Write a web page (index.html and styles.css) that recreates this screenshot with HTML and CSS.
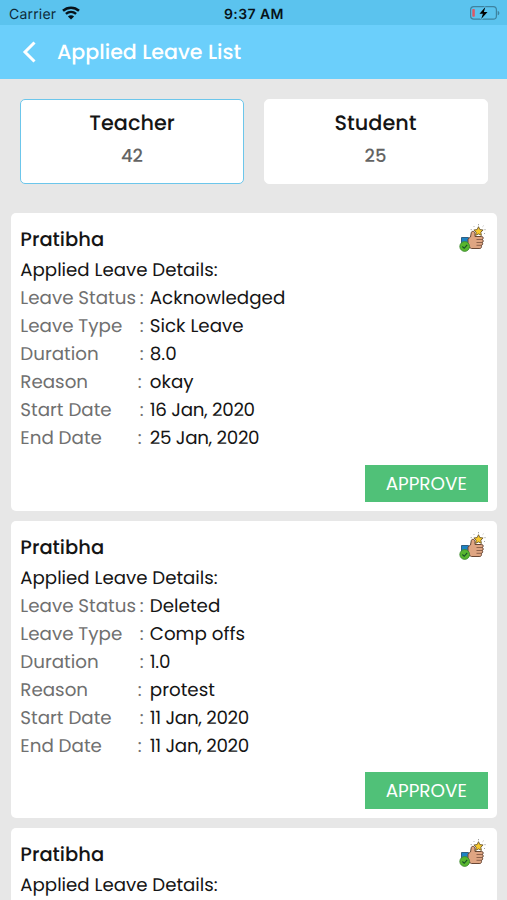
FILE: index.html
```html
<!DOCTYPE html>
<html lang="en">
<head>
<meta charset="utf-8">
<title>Applied Leave List</title>
<link rel="stylesheet" href="styles.css">
</head>
<body>
<svg class="defs" width="0" height="0" aria-hidden="true">
  <symbol id="thumb" viewBox="0 0 28 30">
    <path d="M2.500 13.500h7v9h-7z" fill="#1c83c4" stroke="#17466b" stroke-width=".8"/>
    <path d="M9 15l2.500-2 .8-4.500c.4-1.800 3.700-1.500 3.700 1v3h6.700c1.800 0 2 2.500.6 3 1.400.6 1.200 2.700-.2 3 1 .8.700 2.600-.7 2.800.5 1.800-.3 3.200-1.500 3.200h-8.500L9 22.500z" fill="#dfa582" stroke="#684735" stroke-width="1"/>
    <path d="M17.500 15.500h6M17.500 18.500h6M17.500 21.300h5" stroke="#79503d" stroke-width=".8"/>
    <circle cx="5.700" cy="22.500" r="4.900" fill="#58b62f" stroke="#38852c" stroke-width=".8"/>
    <path d="M3.400 22.500l1.800 1.800 3-3.500" fill="none" stroke="#164f27" stroke-width="1.100"/>
    <path d="M19.500 2.700l1.400 2.900 3.200.4-2.300 2.200.6 3.200-2.900-1.500-2.900 1.500.6-3.200-2.300-2.200 3.200-.4z" fill="#f9ca2b" stroke="#6b5731" stroke-width=".9"/>
    <path d="M12.200 5v1.200M14.500 2l.8.800M19.500 0v1.300M24.500 1.800l-.8.800M26 5v1.200M25.500 9v1" stroke="#999" stroke-width=".9"/>
  </symbol>
</svg>
<div class="statusbar">
  <span class="carrier">Carrier</span>
  <svg class="wifi" width="18" height="14" viewBox="0 0 18 14">
    <path d="M1 4.700C5.600.6 12.400.6 17 4.700M3.900 7.900c3-2.600 7.200-2.600 10.200 0" fill="none" stroke="#07131a" stroke-width="2.500"/>
    <path d="M9 13.600L5.900 10.400c1.700-1.600 4.500-1.600 6.200 0z" fill="#07131a"/>
  </svg>
  <span class="time">9:37 AM</span>
  <svg class="battery" width="30" height="14" viewBox="0 0 30 14">
    <rect x=".6" y=".6" width="25.800" height="12.600" rx="3.200" fill="none" stroke="#3d83a0" stroke-width="1.200"/>
    <path d="M27.700 4.700c2.200.8 2.200 3.800 0 4.600z" fill="#3d83a0"/>
    <rect x="2.300" y="3" width="2.500" height="7.800" rx=".7" fill="#df5663"/>
    <path d="M15.300 1L9.500 7.700h3.400L11.200 13.100 17.500 6.100h-3.600z" fill="#000" stroke="#5bc3ee" stroke-width="2" paint-order="stroke"/>
  </svg>
</div>
<header class="appbar">
  <svg class="back" width="14" height="22" viewBox="0 0 14 22"><path d="M12.500 1.500L3 11l9.500 9.500" fill="none" stroke="#fff" stroke-width="3"/></svg>
  <h1>Applied Leave List</h1>
</header>
<nav class="tabs">
  <div class="tab active"><span class="tab-name">Teacher</span><span class="count">42</span></div>
  <div class="tab"><span class="tab-name">Student</span><span class="count">25</span></div>
</nav>
<main class="list">
  <article class="card">
    <div class="head"><h2>Pratibha</h2><svg class="thumb" width="28" height="30"><use href="#thumb"/></svg></div>
    <p class="sub">Applied Leave Details:</p>
    <dl>
      <dt>Leave Status</dt><i>:</i><dd>Acknowledged</dd>
      <dt>Leave Type</dt><i>:</i><dd>Sick Leave</dd>
      <dt>Duration</dt><i>:</i><dd>8.0</dd>
      <dt>Reason</dt><i class="near">:</i><dd>okay</dd>
      <dt>Start Date</dt><i>:</i><dd class="date">16 Jan, 2020</dd>
      <dt>End Date</dt><i class="near">:</i><dd class="date">25 Jan, 2020</dd>
    </dl>
    <button>APPROVE</button>
  </article>
  <article class="card">
    <div class="head"><h2>Pratibha</h2><svg class="thumb" width="28" height="30"><use href="#thumb"/></svg></div>
    <p class="sub">Applied Leave Details:</p>
    <dl>
      <dt>Leave Status</dt><i>:</i><dd>Deleted</dd>
      <dt>Leave Type</dt><i>:</i><dd>Comp offs</dd>
      <dt>Duration</dt><i>:</i><dd class="date">1.0</dd>
      <dt>Reason</dt><i class="near">:</i><dd>protest</dd>
      <dt>Start Date</dt><i>:</i><dd class="date">11 Jan, 2020</dd>
      <dt>End Date</dt><i class="near">:</i><dd class="date">11 Jan, 2020</dd>
    </dl>
    <button>APPROVE</button>
  </article>
  <article class="card last">
    <div class="head"><h2>Pratibha</h2><svg class="thumb" width="28" height="30"><use href="#thumb"/></svg></div>
    <p class="sub">Applied Leave Details:</p>
  </article>
</main>
</body>
</html>
```
FILE: styles.css
```css
* { box-sizing: border-box; margin: 0; padding: 0; }
body { height: 900px; overflow: hidden; background: #e7e7e7; font-family: Poppins, Inter, sans-serif; color: #151515; text-rendering: geometricPrecision; }
.defs { display: block; }
.statusbar { height: 25px; background: #5bc3ee; display: grid; grid-template-columns: 54px 161px 1fr 30px; align-items: center; padding: 4px 6px 0 9px; line-height: 20px; font-family: Inter, sans-serif; }
.carrier { font-size: 14px; letter-spacing: .2px; color: #0d2a38; }
.wifi { margin: -4px 0 0 -1px; }
.time { font-size: 14px; font-weight: 600; letter-spacing: .4px; color: #07131a; }
.battery { margin: -4px 0 0 -1px; }
.appbar { height: 54px; background: #6bcffb; display: flex; align-items: center; padding-left: 22px; }
.back { flex: none; }
h1 { margin-left: 21px; font-size: 20.6px; font-weight: 500; color: #fff; }
.tabs { display: grid; grid-template-columns: 224px 224px; gap: 19.500px; padding: 19.500px 20px 0; }
.tab { height: 85px; background: #fff; border: 1.500px solid #fff; border-radius: 5px; display: flex; flex-direction: column; align-items: center; padding-top: 9px; }
.tab.active { border-color: #6cc6eb; }
.tab-name { font-size: 20.800px; font-weight: 500; line-height: 30px; }
.count { margin-top: 6px; font-size: 18px; font-weight: 500; line-height: 24px; color: #646464; }
.list { display: flex; flex-direction: column; gap: 10px; padding: 29.500px 10px 0 10.500px; }
.card { height: 297.500px; flex: none; background: #fff; border-radius: 5px; padding: 11px 9.500px 0 9.800px; display: flex; flex-direction: column; }
.card.last { height: 72px; border-radius: 5px 5px 0 0; }
.head { display: flex; justify-content: space-between; height: 32px; }
h2 { font-size: 19.500px; font-weight: 500; line-height: 32px; }
.thumb { margin: 0 1px 0 0; }
.sub { font-size: 18.200px; line-height: 29px; }
dl { display: grid; grid-template-columns: 119.500px 10px 1fr; grid-auto-rows: 28.1px; font-size: 18.300px; line-height: 28px; white-space: nowrap; }
dt, i { color: #707070; font-style: normal; }
i.near { margin-left: -2px; }
.date { letter-spacing: -.3px; }
button { align-self: flex-end; margin-top: 11.400px; width: 122.500px; height: 37px; border: 0; background: #50c178; color: #fff; font: 400 18.400px/37px Poppins, Inter, sans-serif; }
```
